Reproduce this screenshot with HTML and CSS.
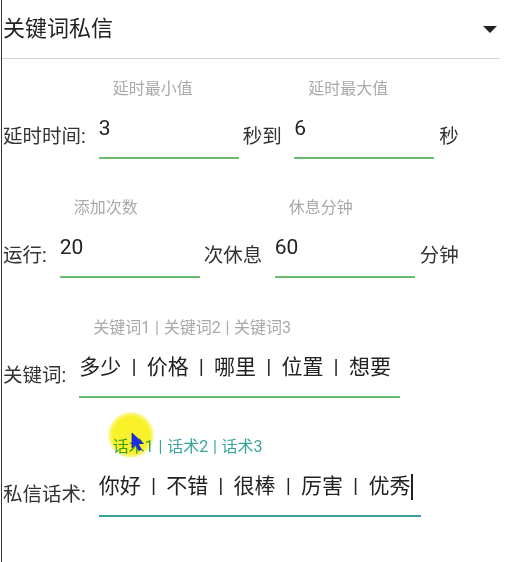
FILE: index.html
```html
<!DOCTYPE html>
<html lang="zh-CN">
<head>
<meta charset="utf-8">
<title>关键词私信</title>
<link rel="stylesheet" href="styles.css">
</head>
<body>
<div class="screen">
  <div class="header">
    <span class="title">关键词私信</span>
    <span class="dropdown-arrow"></span>
  </div>
  <div class="form">
    <div class="row">
      <span class="label">延时时间:</span>
      <div class="field w140">
        <div class="hint">延时最小值</div>
        <div class="input">3</div>
      </div>
      <span class="unit">秒到</span>
      <div class="field w140">
        <div class="hint">延时最大值</div>
        <div class="input">6</div>
      </div>
      <span class="unit unit-end">秒</span>
    </div>
    <div class="row">
      <span class="label">运行:</span>
      <div class="field w140">
        <div class="hint">添加次数</div>
        <div class="input">20</div>
      </div>
      <span class="unit">次休息</span>
      <div class="field w140">
        <div class="hint">休息分钟</div>
        <div class="input">60</div>
      </div>
      <span class="unit unit-end">分钟</span>
    </div>
    <div class="row">
      <span class="label">关键词:</span>
      <div class="field w321">
        <div class="hint">关键词1 | 关键词2 | 关键词3</div>
        <div class="input">多少 | 价格 | 哪里 | 位置 | 想要</div>
      </div>
    </div>
    <div class="row">
      <span class="label">私信话术:</span>
      <div class="field w322 focused">
        <div class="hint">话术1 | 话术2 | 话术3</div>
        <div class="input">你好 | 不错 | 很棒 | 厉害 | 优秀<span class="text-caret"></span></div>
      </div>
    </div>
  </div>
  <div class="touch-spot"></div>
  <svg class="pointer" width="14" height="20" viewBox="0 0 14 20">
    <polygon points="1,1 1,16 4.8,12.6 7.6,18.6 10,17.5 7.3,11.7 12.2,11.4" fill="#1e2ee6" stroke="#1424c8" stroke-width="0.8" stroke-linejoin="round"/>
  </svg>
</div>
</body>
</html>
```
FILE: styles.css
```css
html, body {
  margin: 0;
  padding: 0;
  background: #ffffff;
}

body {
  font-family: "Roboto", "Noto Sans CJK SC", sans-serif;
  color: #2a2a2a;
}

.screen {
  position: relative;
  margin-left: 1px;
  border-left: 1px solid #3a3a3a;
  height: 562px;
  box-sizing: border-box;
  overflow: hidden;
}

.header {
  height: 58px;
  margin-right: 7px;
  padding: 0 3px 0 1px;
  border-bottom: 1px solid #d2d2d2;
  display: flex;
  align-items: center;
  justify-content: space-between;
}

.title {
  font-size: 22px;
  color: #222;
  padding-bottom: 7px;
}

.dropdown-arrow {
  width: 0;
  height: 0;
  border-left: 7px solid transparent;
  border-right: 7px solid transparent;
  border-top: 7px solid #222;
}

.form {
  display: flex;
  flex-direction: column;
  gap: 19.3px;
  padding-left: 1px;
}

.row {
  height: 100px;
  display: flex;
  align-items: flex-end;
}

.label,
.unit {
  font-size: 19.5px;
  line-height: 30px;
  padding-bottom: 7px;
  color: #333;
  white-space: nowrap;
}

.label {
  margin-right: 13px;
}

.unit {
  margin: 0 12.5px 0 4px;
}

.unit-end {
  margin: 0 0 0 5px;
}

.field {
  display: flex;
  flex-direction: column;
}

.w140 { width: 140px; }
.w321 { width: 321px; }
.w322 { width: 322px; }

.hint {
  font-size: 16px;
  line-height: 20px;
  color: #a9a9a9;
  padding-left: 14px;
  margin-bottom: 14px;
  white-space: nowrap;
  word-spacing: 0.05em;
}

.input {
  font-size: 21px;
  line-height: 30px;
  padding-bottom: 14px;
  border-bottom: 2px solid #6abd6c;
  color: #222;
  white-space: nowrap;
  word-spacing: 0.235em;
}

.focused .hint {
  color: #36a69b;
}

.focused .input {
  border-bottom-color: #35a39a;
}

.text-caret {
  display: inline-block;
  width: 1.5px;
  height: 26px;
  background: #222;
  vertical-align: middle;
  margin-left: 1px;
}

.touch-spot {
  position: absolute;
  left: 106px;
  top: 412px;
  width: 46px;
  height: 46px;
  border-radius: 50%;
  background: radial-gradient(circle, rgba(248, 240, 30, 0.95) 56%, rgba(248, 240, 30, 0.5) 67%, rgba(248, 240, 30, 0) 74%);
  mix-blend-mode: multiply;
}

.pointer {
  position: absolute;
  left: 129px;
  top: 432px;
}
```
